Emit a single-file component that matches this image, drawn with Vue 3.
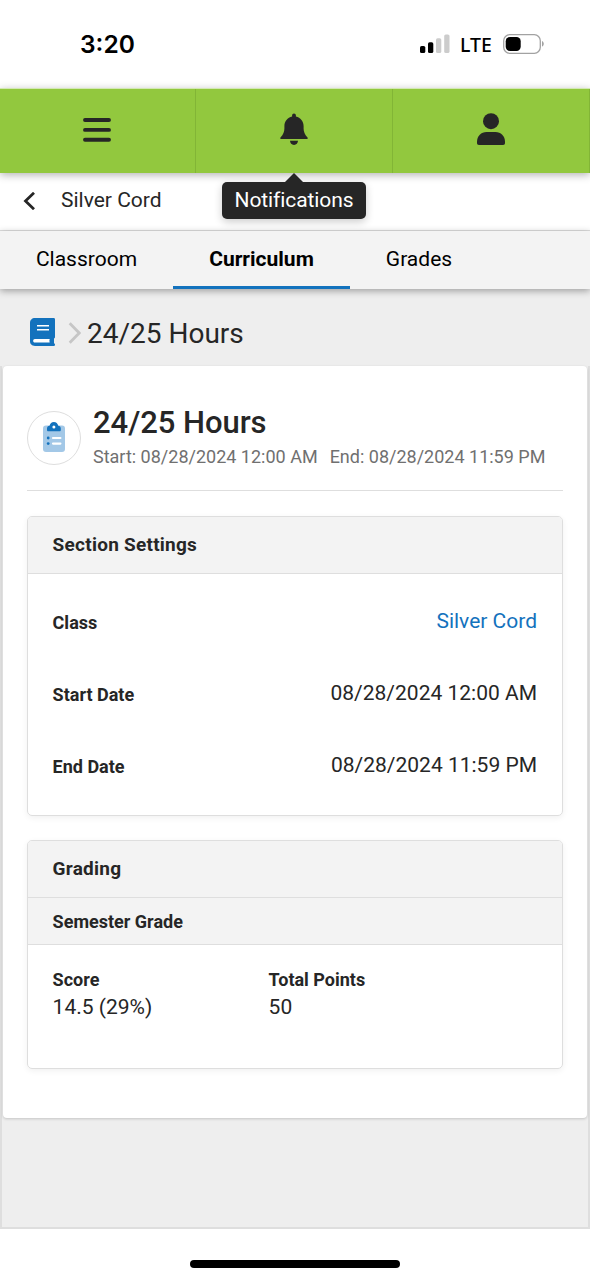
<script setup>
const tabs = [
  { name: 'Classroom', cls: 'classroom' },
  { name: 'Curriculum', cls: 'curriculum active' },
  { name: 'Grades', cls: 'grades' },
]
const settings = [
  { label: 'Class', value: 'Silver Cord', link: true },
  { label: 'Start Date', value: '08/28/2024 12:00 AM' },
  { label: 'End Date', value: '08/28/2024 11:59 PM' },
]
</script>

<template>
  <div class="screen">
    <header class="status">
      <span class="time">3:20</span>
      <svg class="signal" width="30" height="20" viewBox="0 0 30 20">
        <rect x="0" y="12" width="5.3" height="7" rx="1.6" />
        <rect x="8" y="8.3" width="5.3" height="10.7" rx="1.6" />
        <rect x="16" y="4.2" width="5.3" height="14.8" rx="1.6" fill="#ccc" />
        <rect x="24.2" y="0.5" width="5.3" height="18.5" rx="1.6" fill="#ccc" />
      </svg>
      <span class="lte">LTE</span>
      <svg class="battery" width="42" height="20" viewBox="0 0 42 20">
        <rect x="0.7" y="0.7" width="36.6" height="18.6" rx="6" fill="none" stroke="#a2a2a2" stroke-width="1.3" />
        <rect x="2.7" y="3" width="15" height="14" rx="4.2" />
        <path d="M39 7v5.6c2.4-.9 2.4-4.7 0-5.600z" fill="#a2a2a2" />
      </svg>
    </header>

    <nav class="topbar">
      <button class="cell" aria-label="Menu">
        <svg width="28" height="26" viewBox="0 0 28 26" fill="none" stroke="#262626" stroke-width="3.9" stroke-linecap="round">
          <path d="M2 3h24M2 12.900h24M2 22.800h24" />
        </svg>
      </button>
      <button class="cell bell" aria-label="Notifications">
        <svg width="28" height="32" viewBox="0 0 28 32" fill="#262626">
          <path d="M14 .4c1.100 0 1.900.8 1.900 1.900v1.100c4.600 1 7.700 4.800 7.700 9.600v2.500c0 3.200 1.200 6.100 3.700 8.700.9 1 .6 1.900-.8 1.900h-25c-1.400 0-1.700-.9-.8-1.900 2.500-2.600 3.700-5.500 3.700-8.700v-2.500c0-4.800 3.100-8.600 7.700-9.600v-1.100c0-1.100.8-1.900 1.900-1.900z" />
          <path d="M10 27.800h8c0 2.300-1.700 4.100-4 4.100s-4-1.800-4-4.100z" />
        </svg>
        <span class="tooltip">Notifications</span>
      </button>
      <button class="cell account" aria-label="Account">
        <svg width="28" height="32" viewBox="0 0 28 32" fill="#262626">
          <circle cx="14" cy="8.200" r="8" />
          <path d="M0 30v-1.200C0 23 4.200 19 9.500 19h9c5.300 0 9.500 4 9.500 9.800V30c0 1.300-.7 2-2 2H2c-1.300 0-2-.7-2-2z" />
        </svg>
      </button>
    </nav>

    <div class="back">
      <svg width="12" height="18" viewBox="0 0 12 18" fill="none" stroke="#262626" stroke-width="2.800">
        <path d="M11 .8 2.500 9l8.500 8.200" />
      </svg>
      <span>Silver Cord</span>
    </div>

    <nav class="tabs">
      <a v-for="t in tabs" :key="t.name" class="tab" :class="t.cls"><span>{{ t.name }}</span></a>
    </nav>

    <main class="page">
      <div class="crumbs">
        <svg class="book" width="26" height="28" viewBox="0 0 26 28">
          <path fill="#1372bd" d="M5 0h18.500C24.600 0 25 .5 25 1.500v17.600c0 .8-.4 1.200-1 1.500v4.700c.7.200 1 .6 1 1.200 0 1-.6 1.500-1.500 1.500H5c-3 0-5-2-5-4.700V5c0-3 2-5 5-5z" />
          <path d="M4.900 21h14.800c-.4 1.200-.4 2.400 0 3.600H4.900c-2.300 0-2.300-3.600 0-3.600z" fill="#fff" />
          <path d="M7 7.800h12M7 11.800h12" stroke="#fff" stroke-width="1.500" />
        </svg>
        <svg class="chev" width="13" height="22" viewBox="0 0 13 22" fill="none" stroke="#c6c6c6" stroke-width="2.800">
          <path d="M1.700 1.200 11.200 11 1.700 20.800" />
        </svg>
        <span class="crumb-text">24/25 Hours</span>
      </div>

      <section class="card">
        <div class="head">
          <div class="badge">
            <svg width="22" height="30" viewBox="0 0 22 30">
              <rect x="0" y="3.500" width="22" height="26.500" rx="3" fill="#a3c8e7" />
              <path d="M4 8V6.500C4 4.700 5 3.900 6.600 3.700 7 1.500 8.600 0 10.900 0s3.900 1.500 4.300 3.700c1.600.2 2.600 1 2.600 2.800V8c0 .9-.5 1.300-1.200 1.300H5.200C4.500 9.300 4 8.900 4 8z" fill="#1372bd" />
              <circle cx="10.900" cy="4.900" r="1.500" fill="#fff" />
              <circle cx="5.200" cy="16" r="1.400" fill="#1372bd" />
              <circle cx="5.200" cy="21.600" r="1.400" fill="#1372bd" />
              <path d="M10 16h7.400M10 21.600h7.400" stroke="#fff" stroke-width="2.200" stroke-linecap="round" />
            </svg>
          </div>
          <div class="titles">
            <h1><span>24/25 Hours</span></h1>
            <p><span>Start: 08/28/2024 12:00 AM</span><span>End: 08/28/2024 11:59 PM</span></p>
          </div>
        </div>

        <div class="panel settings">
          <h2><span>Section Settings</span></h2>
          <dl class="rows">
            <div v-for="s in settings" :key="s.label" class="row">
              <dt>{{ s.label }}</dt>
              <dd :class="{ link: s.link }">{{ s.value }}</dd>
            </div>
          </dl>
        </div>

        <div class="panel grading">
          <h2><span>Grading</span></h2>
          <h3><span>Semester Grade</span></h3>
          <dl class="scores">
            <div><dt>Score</dt><dd>14.5 (29%)</dd></div>
            <div><dt>Total Points</dt><dd>50</dd></div>
          </dl>
        </div>
      </section>
    </main>

    <footer class="home"><span></span></footer>
  </div>
</template>

<style>
body { margin: 0; background: #fff; }
</style>

<style scoped>
* { box-sizing: border-box; }
.screen { width: 590px; height: 1280px; overflow: hidden; display: flex; flex-direction: column; background: #fff; font-family: Roboto, sans-serif; color: #262626; font-size: 21px; }
svg { display: block; flex: none; }
h1, h2, h3, p, dl, dd, dt { margin: 0; }
span, dt, dd { white-space: nowrap; }

.status { height: 88px; flex: none; display: flex; align-items: center; color: #000; padding-left: 80px; }
.time { width: 340px; font: 600 24.500px/30px Inter, sans-serif; letter-spacing: 0; }
.signal { margin-top: -1px; }
.lte { width: 42px; margin: 1px 0 0 10px; font: 500 19.500px/24px "Noto Sans", sans-serif; }
.battery { margin-left: 0.500px; margin-top: -1px; }

.topbar { height: 85px; flex: none; display: grid; grid-template-columns: 196px 197px 197px; background: #92c83e; border-top: 1px solid #d3e9b2; position: relative; z-index: 3; box-shadow: 0 2px 8px rgba(0, 0, 0, 0.3); }
.cell { border: 0; border-right: 1px solid #82b536; background: none; padding: 0 1px 0 0; display: flex; justify-content: center; align-items: center; position: relative; }
.cell svg { margin-top: -3px; }
.bell { padding-right: 0; }
.account { padding-right: 1px; }
.bell svg, .account svg { margin-top: -4px; }
.tooltip { position: absolute; top: 93px; left: 26px; width: 144px; height: 37px; border-radius: 5px; background: #262626; color: #fff; font: 21px/37px Roboto, sans-serif; letter-spacing: -0.1px; text-align: center; box-shadow: 0 3px 8px rgba(0, 0, 0, 0.2); }
.tooltip::before { content: ""; position: absolute; left: 63px; top: -9px; border: 9px solid transparent; border-top: 0; border-bottom-color: #262626; }

.back { height: 58px; flex: none; display: flex; align-items: center; padding: 0 0 3px 23px; border-bottom: 1px solid #dedede; }
.back svg { margin-top: 2px; }
.back span { margin-left: 26px; }
.tabs { height: 58px; flex: none; display: flex; background: #f3f3f3; color: #000; position: relative; z-index: 2; box-shadow: 0 2px 7px rgba(0, 0, 0, 0.34); }
.tab { display: flex; justify-content: center; align-items: center; border-bottom: 3px solid transparent; }
.classroom { width: 173px; }
.curriculum { width: 177px; font-weight: 700; }
.grades { width: 138px; }
.active { border-color: #1372bd; }

.page { height: 940px; flex: none; background: #eee; border: 2px solid #dedede; border-top: 0; }
.crumbs { height: 77px; margin: 0 -2px; background: #eee; display: flex; align-items: center; padding: 10px 0 0 30px; }
.book { margin-top: -2px; }
.chev { margin-left: 12px; }
.crumb-text { font-size: 28px; line-height: 34px; margin: 2px 0 0 6px; }

.card { height: 752px; margin: 0 1px; background: #fff; border-radius: 4px; box-shadow: 0 1px 3px rgba(0, 0, 0, 0.18); padding: 0 24px; }
.head { height: 125px; border-bottom: 1px solid #dedede; display: flex; padding-top: 39px; }
.badge { width: 54px; height: 54px; margin-top: 6px; border: 1px solid #dedede; border-radius: 50%; display: flex; justify-content: center; align-items: center; padding-bottom: 2px; }
.titles { margin-left: 12px; }
h1 { font-size: 31px; line-height: 34px; font-weight: 500; letter-spacing: -0.050px; padding-top: 1px; }
p { display: flex; gap: 12px; font-size: 18px; line-height: 22px; margin-top: 6px; color: #707070; }

.panel { border: 1px solid #dedede; border-radius: 5px; box-shadow: 0 2px 6px rgba(0, 0, 0, 0.06); overflow: hidden; }
.settings { height: 300px; margin-top: 25px; }
.grading { height: 229px; margin-top: 24px; }
h2, h3 { background: #f3f3f3; border-bottom: 1px solid #dedede; padding-left: 24.600px; font-weight: 700; }
h2 { height: 57px; font-size: 19px; line-height: 56px; letter-spacing: 0.250px; }
h3 { height: 47px; font-size: 18px; line-height: 47px; }
.rows { padding: 12px 25px 0 24.600px; }
.row { height: 72px; display: flex; align-items: center; justify-content: space-between; }
dt { font-size: 18px; line-height: 24px; font-weight: 700; }
.row dt { padding-top: 2px; }
dd { font-size: 21px; line-height: 28px; }
.row dd { padding-bottom: 2px; }
.link { color: #1372bd; }
.scores { display: grid; grid-template-columns: 216px 1fr; padding: 23px 0 0 24.600px; }
.scores dd { margin-top: 1px; }

.home { flex: 1; display: flex; justify-content: center; padding-top: 31px; }
.home span { width: 210px; height: 8px; border-radius: 4px; background: #000; }
</style>
